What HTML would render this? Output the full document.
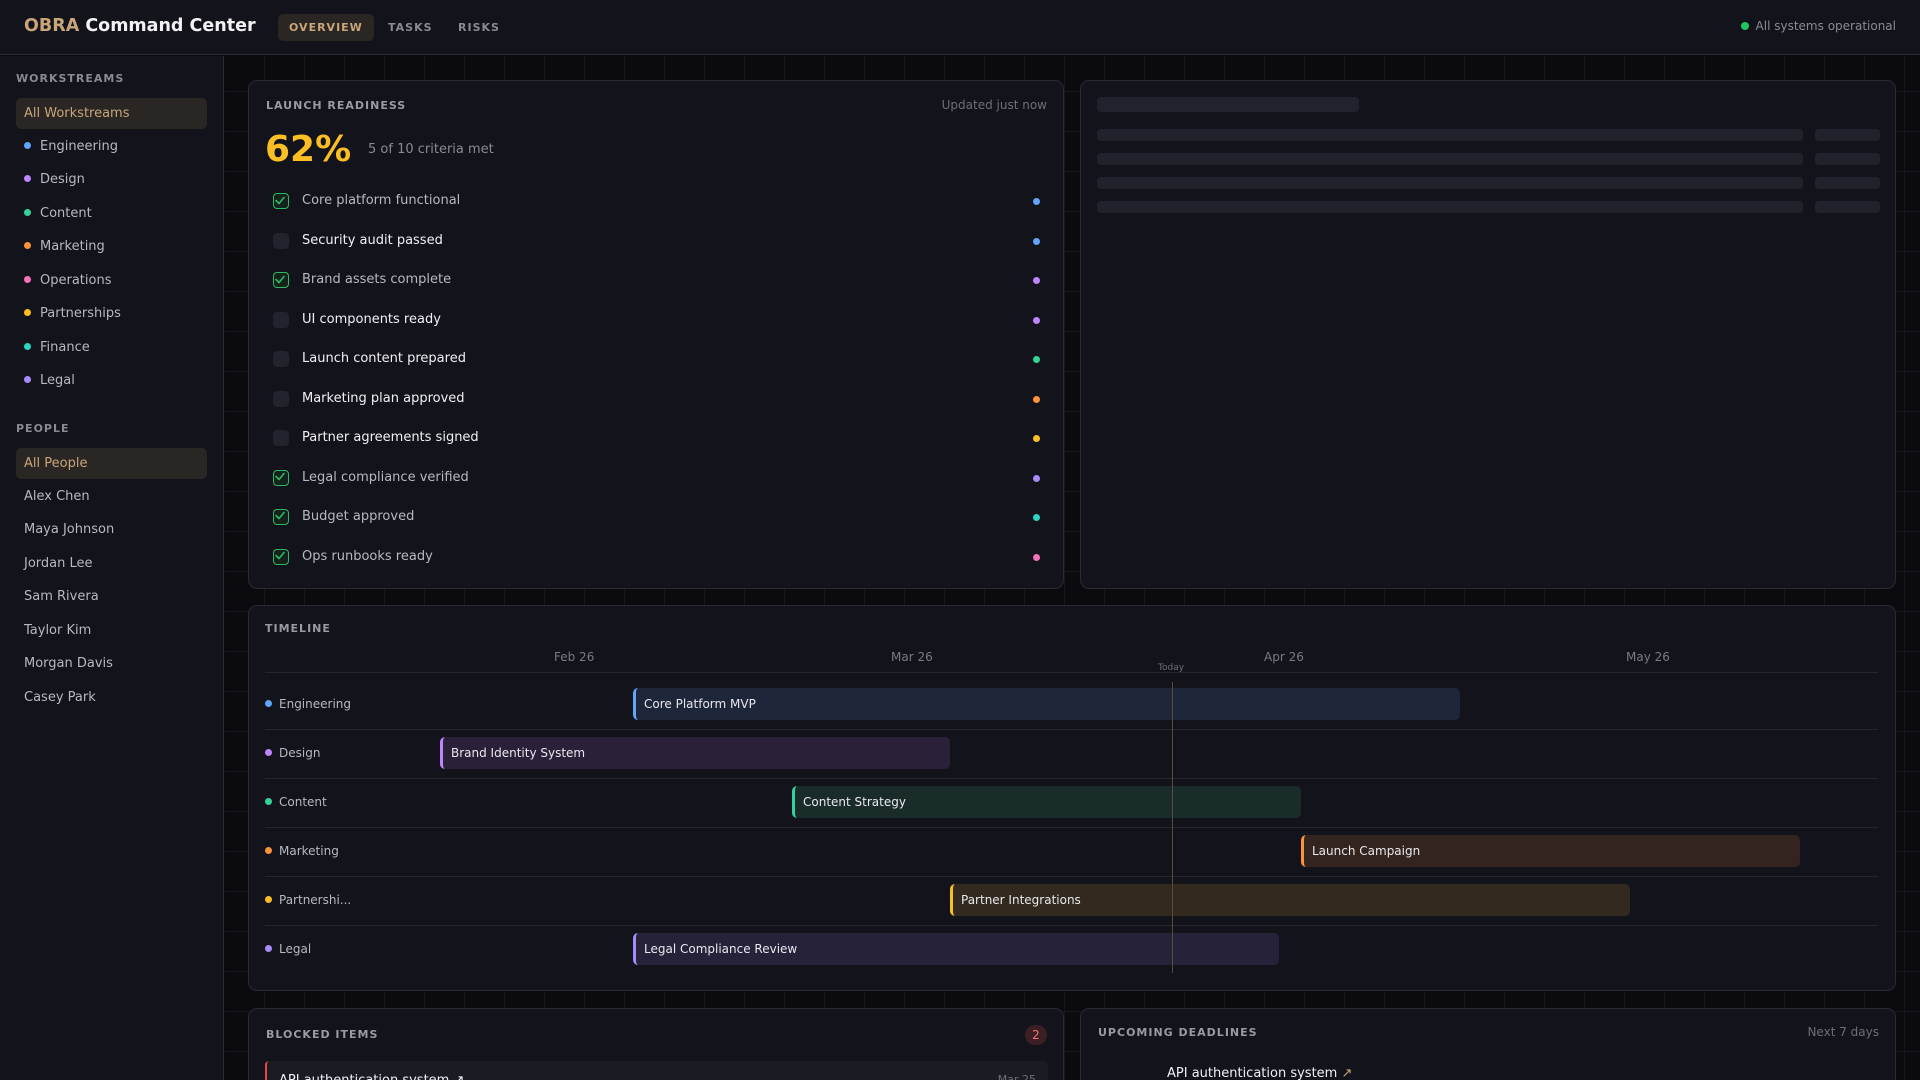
<!DOCTYPE html>
<html style="width:1920px;height:1080px;overflow:hidden"><head><meta charset="utf-8"><style>
*{box-sizing:border-box;margin:0;padding:0}
body{width:1920px;height:1080px;overflow:hidden;background:#0b0b0f;font-family:"DejaVu Sans","Liberation Sans",sans-serif;color:#d8d8de;position:relative}
.hdr{position:absolute;left:0;top:0;width:1920px;height:55px;background:#13131b;border-bottom:1px solid #2a2a33}
.logo{position:absolute;left:24px;top:16px;font-size:17.5px;font-weight:bold;color:#f2f2f4}
.logo b{color:#c9a57a}
.nav{position:absolute;top:14px;height:27px;font-size:11px;font-weight:bold;letter-spacing:1px;color:#8a8a94;line-height:27px;padding:0 11px}
.nav.on{background:#2a2624;color:#c9a57a;border-radius:5px}
.status{position:absolute;right:24px;top:19px;font-size:12px;color:#8a8a94}
.status i{display:inline-block;width:8px;height:8px;border-radius:50%;background:#22c55e;margin-right:7px}
.side{position:absolute;left:0;top:56px;width:224px;height:1024px;background:#13131b;border-right:1px solid #2a2a33}
.sl{position:absolute;left:16px;font-size:11px;font-weight:bold;letter-spacing:1px;color:#8a8a94}
.si{position:absolute;left:16px;width:191px;height:31px;line-height:31px;padding-left:8px;font-size:13px;color:#b8b8c0}
.si.on{background:#2a2624;color:#c9a57a;border-radius:5px}
.si i{display:inline-block;width:7px;height:7px;border-radius:50%;margin-right:9px;vertical-align:1px}
.main{position:absolute;left:225px;top:56px;right:0;bottom:0;background-color:#0b0b0f;background-image:linear-gradient(#16161c 1px,transparent 1px),linear-gradient(90deg,#16161c 1px,transparent 1px);background-size:40px 40px;background-position:-1px 35px}
.card{position:absolute;background:#13131b;border:1px solid #2a2a35;border-radius:9px;overflow:hidden}
.ct{position:absolute;font-size:11px;font-weight:bold;letter-spacing:1px;color:#9a9aa4}
.muted{position:absolute;font-size:12px;color:#6e6e78}
.cr{position:absolute;left:24px;width:770px;height:20px;font-size:13px;line-height:20px}
.cb{position:absolute;left:0;top:2px;width:16px;height:16px;border-radius:4px;background:#23232d}
.cb.ok{background:#13231b;border:1.5px solid #2fb865}
.cr span{position:absolute;left:29px}
.cr i{position:absolute;left:760px;top:7px;width:7px;height:7px;border-radius:50%}
.sk{position:absolute;height:12px;border-radius:4px;background:#22222c}
.tl{position:absolute;font-size:12px;color:#7a7a84}
.rl{position:absolute;left:265px;font-size:12px;color:#b8b8c0}
.rl i{display:inline-block;width:7px;height:7px;border-radius:50%;margin-right:7px;vertical-align:1px}
.bar{position:absolute;height:32px;border-radius:5px;font-size:12px;line-height:32px;padding-left:8px;color:#e8e8ee;border-left:3px solid}
.sep{position:absolute;left:265px;width:1613px;height:1px;background:#262630}
</style></head><body>
<div class="hdr">
<div class="logo"><b>OBRA</b> Command Center</div>
<div class="nav on" style="left:278px">OVERVIEW</div>
<div class="nav" style="left:377px">TASKS</div>
<div class="nav" style="left:447px">RISKS</div>
<div class="status"><i></i>All systems operational</div>
</div>
<div class="side">
<div class="sl" style="top:16px">WORKSTREAMS</div>
<div class="si on" style="top:42px">All Workstreams</div>
<div class="si" style="top:75px"><i style="background:#60a5fa"></i>Engineering</div>
<div class="si" style="top:108px"><i style="background:#c084fc"></i>Design</div>
<div class="si" style="top:142px"><i style="background:#34d399"></i>Content</div>
<div class="si" style="top:175px"><i style="background:#fb923c"></i>Marketing</div>
<div class="si" style="top:209px"><i style="background:#f472b6"></i>Operations</div>
<div class="si" style="top:242px"><i style="background:#fbbf24"></i>Partnerships</div>
<div class="si" style="top:276px"><i style="background:#2dd4bf"></i>Finance</div>
<div class="si" style="top:309px"><i style="background:#a78bfa"></i>Legal</div>
<div class="sl" style="top:366px">PEOPLE</div>
<div class="si on" style="top:392px">All People</div>
<div class="si" style="top:425px">Alex Chen</div>
<div class="si" style="top:458px">Maya Johnson</div>
<div class="si" style="top:492px">Jordan Lee</div>
<div class="si" style="top:525px">Sam Rivera</div>
<div class="si" style="top:559px">Taylor Kim</div>
<div class="si" style="top:592px">Morgan Davis</div>
<div class="si" style="top:626px">Casey Park</div>
</div>
<div class="main"></div>

<div class="card" style="left:248px;top:80px;width:816px;height:509px">
<div class="ct" style="left:17px;top:18px">LAUNCH READINESS</div>
<div class="muted" style="right:16px;top:17px">Updated just now</div>
<div style="position:absolute;left:16px;top:48px;font-size:36px;font-weight:bold;color:#fbbf24">62%</div>
<div style="position:absolute;left:119px;top:61px;font-size:13px;color:#8a8a94">5 of 10 criteria met</div>
<div class="cr" style="top:110px;color:#b8b8c0"><div class="cb ok"></div><span>Core platform functional</span><i style="background:#60a5fa"></i></div>
<div class="cr" style="top:150px;color:#f0f0f4"><div class="cb"></div><span>Security audit passed</span><i style="background:#60a5fa"></i></div>
<div class="cr" style="top:189px;color:#b8b8c0"><div class="cb ok"></div><span>Brand assets complete</span><i style="background:#c084fc"></i></div>
<div class="cr" style="top:229px;color:#f0f0f4"><div class="cb"></div><span>UI components ready</span><i style="background:#c084fc"></i></div>
<div class="cr" style="top:268px;color:#f0f0f4"><div class="cb"></div><span>Launch content prepared</span><i style="background:#34d399"></i></div>
<div class="cr" style="top:308px;color:#f0f0f4"><div class="cb"></div><span>Marketing plan approved</span><i style="background:#fb923c"></i></div>
<div class="cr" style="top:347px;color:#f0f0f4"><div class="cb"></div><span>Partner agreements signed</span><i style="background:#fbbf24"></i></div>
<div class="cr" style="top:387px;color:#b8b8c0"><div class="cb ok"></div><span>Legal compliance verified</span><i style="background:#a78bfa"></i></div>
<div class="cr" style="top:426px;color:#b8b8c0"><div class="cb ok"></div><span>Budget approved</span><i style="background:#2dd4bf"></i></div>
<div class="cr" style="top:466px;color:#b8b8c0"><div class="cb ok"></div><span>Ops runbooks ready</span><i style="background:#f472b6"></i></div>
</div>
<svg style="position:absolute;left:0;top:0" width="400" height="600"><g fill="none" stroke="#2fb865" stroke-width="1.6" stroke-linecap="round" stroke-linejoin="round">
<path d="M276 200.5l3 3 5-6"/><path d="M276 279.5l3 3 5-6"/><path d="M276 476.5l3 3 5-6"/><path d="M276 515.5l3 3 5-6"/><path d="M276 555.5l3 3 5-6"/></g></svg>

<div class="card" style="left:1080px;top:80px;width:816px;height:509px">
<div class="sk" style="left:16px;top:16px;width:262px;height:15px"></div>
<div class="sk" style="left:16px;top:48px;width:706px"></div><div class="sk" style="left:734px;top:48px;width:65px"></div>
<div class="sk" style="left:16px;top:72px;width:706px"></div><div class="sk" style="left:734px;top:72px;width:65px"></div>
<div class="sk" style="left:16px;top:96px;width:706px"></div><div class="sk" style="left:734px;top:96px;width:65px"></div>
<div class="sk" style="left:16px;top:120px;width:706px"></div><div class="sk" style="left:734px;top:120px;width:65px"></div>
</div>

<div class="card" style="left:248px;top:605px;width:1648px;height:386px"></div>
<div class="ct" style="left:265px;top:622px">TIMELINE</div>
<div class="tl" style="left:554px;top:650px">Feb 26</div>
<div class="tl" style="left:891px;top:650px">Mar 26</div>
<div class="tl" style="left:1264px;top:650px">Apr 26</div>
<div class="tl" style="left:1626px;top:650px">May 26</div>
<div style="position:absolute;left:1158px;top:663px;font-size:9px;color:#6e6e78">Today</div>
<div class="sep" style="top:672px"></div>
<div class="sep" style="top:729px"></div><div class="sep" style="top:778px"></div><div class="sep" style="top:827px"></div><div class="sep" style="top:876px"></div><div class="sep" style="top:925px"></div>
<div class="rl" style="top:697px"><i style="background:#60a5fa"></i>Engineering</div>
<div class="rl" style="top:746px"><i style="background:#c084fc"></i>Design</div>
<div class="rl" style="top:795px"><i style="background:#34d399"></i>Content</div>
<div class="rl" style="top:844px"><i style="background:#fb923c"></i>Marketing</div>
<div class="rl" style="top:893px"><i style="background:#fbbf24"></i>Partnershi...</div>
<div class="rl" style="top:942px"><i style="background:#a78bfa"></i>Legal</div>
<div class="bar" style="left:633px;top:688px;width:827px;background:#1e2639;border-color:#60a5fa">Core Platform MVP</div>
<div class="bar" style="left:440px;top:737px;width:510px;background:#2a2139;border-color:#c084fc">Brand Identity System</div>
<div class="bar" style="left:792px;top:786px;width:509px;background:#1a2c2a;border-color:#34d399">Content Strategy</div>
<div class="bar" style="left:1301px;top:835px;width:499px;background:#33241f;border-color:#fb923c">Launch Campaign</div>
<div class="bar" style="left:950px;top:884px;width:680px;background:#322a1e;border-color:#fbbf24">Partner Integrations</div>
<div class="bar" style="left:633px;top:933px;width:646px;background:#252239;border-color:#a78bfa">Legal Compliance Review</div>
<div style="position:absolute;left:1172px;top:682px;width:1px;height:291px;background:#5a4c3c"></div>

<div class="card" style="left:248px;top:1008px;width:816px;height:90px">
<div class="ct" style="left:17px;top:19px">BLOCKED ITEMS</div>
<div style="position:absolute;right:16px;top:16px;width:22px;height:20px;border-radius:10px;background:#3a1f24;color:#f87171;font-size:12px;text-align:center;line-height:20px">2</div>
<div style="position:absolute;left:16px;top:52px;width:783px;height:60px;background:#1b1b24;border-left:2px solid #ef4444;border-radius:4px">
<div style="position:absolute;left:12px;top:12px;font-size:13px;color:#f0f0f4">API authentication system ↗</div>
<div style="position:absolute;right:12px;top:12px;font-size:11px;color:#6e6e78">Mar 25</div></div>
</div>
<div class="card" style="left:1080px;top:1008px;width:816px;height:90px">
<div class="ct" style="left:17px;top:17px">UPCOMING DEADLINES</div>
<div class="muted" style="right:16px;top:16px">Next 7 days</div>
<div style="position:absolute;left:86px;top:57px;font-size:13px;color:#f0f0f4">API authentication system <span style="color:#c9a57a">↗</span></div>
</div>
</body></html>
